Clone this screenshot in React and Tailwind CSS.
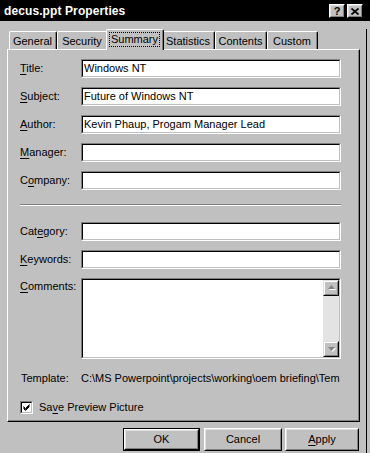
import React from "react";

function Raised({ className = "", innerClassName = "", children }) {
  return (
    <div className={`border border-t-white border-l-white border-r-black border-b-black bg-[#c0c0c0] ${className}`}>
      <div className={`w-full h-full border border-t-[#dfdfdf] border-l-[#dfdfdf] border-r-[#808080] border-b-[#808080] flex items-center justify-center ${innerClassName}`}>
        {children}
      </div>
    </div>
  );
}

function Field({ className = "", children, innerClassName = "" }) {
  return (
    <div className={`border border-t-[#808080] border-l-[#808080] border-r-white border-b-white ${className}`}>
      <div className={`w-full h-full border border-t-black border-l-black border-r-[#c0c0c0] border-b-[#c0c0c0] bg-white ${innerClassName}`}>
        {children}
      </div>
    </div>
  );
}

function U({ children }) {
  return <span className="underline underline-offset-[2px]">{children}</span>;
}

function Row({ label, value }) {
  return (
    <div className="flex items-center h-[19px]">
      <div className="w-[61px] leading-[13px] whitespace-nowrap">{label}</div>
      <Field className="w-[260px] h-[19px]" innerClassName="flex items-center pl-[1px] leading-[13px] whitespace-nowrap overflow-hidden">
        {value}
      </Field>
    </div>
  );
}

function Tab({ label, w, selected }) {
  if (selected) {
    return (
      <div className={`relative z-10 -mx-[2px] h-[21px] ${w} border-l border-t border-white border-r border-r-black rounded-t-[2px] bg-[#c0c0c0]`}>
        <div className="h-full border-r border-r-[#808080] pt-[2px] px-[2px]">
          <div className="h-[15px] border border-dotted border-black flex items-center justify-center leading-[13px]">
            {label}
          </div>
        </div>
      </div>
    );
  }
  return (
    <div className={`mt-[2px] h-[18px] ${w} border-l border-t border-white border-r border-r-black rounded-t-[2px]`}>
      <div className="h-full border-r border-r-[#808080] flex items-center justify-center leading-[13px] pt-[1px]">
        {label}
      </div>
    </div>
  );
}

function ScrollBtn({ down }) {
  return (
    <div className="h-[16px] w-full border border-t-[#dfdfdf] border-l-[#dfdfdf] border-r-black border-b-black bg-[#c0c0c0]">
      <div className="w-full h-full border border-t-white border-l-white border-r-[#808080] border-b-[#808080] flex items-center justify-center">
        <svg width="9" height="6" viewBox="0 0 9 6">
          {down ? (
            <>
              <polygon points="2,2 9,2 5.5,6" fill="#ffffff" />
              <polygon points="1,1 8,1 4.5,5" fill="#808080" />
            </>
          ) : (
            <>
              <polygon points="5.5,1 9,5 2,5" fill="#ffffff" />
              <polygon points="4.5,0 8,4 1,4" fill="#808080" />
            </>
          )}
        </svg>
      </div>
    </div>
  );
}

export default function App() {
  return (
    <div className="w-[370px] h-[453px] bg-[#c0c0c0] text-black text-[11px] font-[family-name:Liberation_Sans,Arial,sans-serif] overflow-hidden">
      {/* Title bar */}
      <div className="h-[21px] bg-black flex items-center justify-between pl-[4px] pr-[7px]">
        <span className="text-white font-bold text-[12px] leading-none tracking-[0.1px]">decus.ppt Properties</span>
        <div className="flex gap-[2px] pt-[1px]">
          <Raised className="w-[16px] h-[14px]">
            <span className="font-bold text-[11px] leading-none">?</span>
          </Raised>
          <Raised className="w-[16px] h-[14px]">
            <svg width="8" height="7" viewBox="0 0 8 7">
              <path d="M0.5 0.5 L7.5 6.5 M7.5 0.5 L0.5 6.5" stroke="#000" strokeWidth="1.7" />
            </svg>
          </Raised>
        </div>
      </div>

      {/* Body */}
      <div className="w-[367px] h-[432px] border-r border-black">
        {/* Tabs */}
        <div className="flex items-start h-[21px] mt-[8px] pl-[9px] -mb-px relative z-10">
          <Tab label="General" w="w-[48px]" />
          <Tab label="Security" w="w-[51px]" />
          <Tab label="Summary" w="w-[58px]" selected />
          <Tab label="Statistics" w="w-[53px]" />
          <Tab label="Contents" w="w-[52px]" />
          <Tab label="Custom" w="w-[51px]" />
        </div>

        {/* Panel */}
        <div className="ml-[7px] w-[353px] h-[373px] border border-t-white border-l-white border-r-black border-b-black">
          <div className="h-full border-r border-b border-r-[#808080] border-b-[#808080] pt-[9px] pl-[12px]">
            <div className="flex flex-col gap-[9px]">
              <Row label={<><U>T</U>itle:</>} value="Windows NT" />
              <Row label={<><U>S</U>ubject:</>} value="Future of Windows NT" />
              <Row label={<><U>A</U>uthor:</>} value="Kevin Phaup, Progam Manager Lead" />
              <Row label={<><U>M</U>anager:</>} value="" />
              <Row label={<>C<U>o</U>mpany:</>} value="" />
            </div>

            <div className="mt-[14px] w-[321px] h-[2px] border-t border-t-[#808080] border-b border-b-white" />

            <div className="mt-[16px] flex flex-col gap-[9px]">
              <Row label={<>Cat<U>e</U>gory:</>} value="" />
              <Row label={<><U>K</U>eywords:</>} value="" />
              <div className="flex items-start h-[81px]">
                <div className="w-[61px] leading-[13px] pt-[2px]"><U>C</U>omments:</div>
                <Field className="w-[260px] h-[81px]" innerClassName="flex">
                  <div className="flex-1" />
                  <div className="w-[16px] h-full flex flex-col">
                    <ScrollBtn />
                    <div className="flex-1 bg-[#e3e3e3]" />
                    <ScrollBtn down />
                  </div>
                </Field>
              </div>
            </div>

            <div className="mt-[13px] flex h-[13px] leading-[13px]">
              <div className="w-[61px] pl-[1px]">Template:</div>
              <div className="whitespace-nowrap">C:\MS Powerpoint\projects\working\oem briefing\Tem</div>
            </div>

            <div className="mt-[16px] flex items-center h-[13px]">
              <Field className="w-[13px] h-[13px]" innerClassName="flex items-center justify-center">
                <svg width="7" height="7" viewBox="0 0 7 7">
                  <path d="M0.5 2.5 L2.5 4.5 L6.5 0.5 M0.5 3.5 L2.5 5.5 L6.5 1.5 M0.5 4.5 L2.5 6.5 L6.5 2.5" stroke="#000" strokeWidth="1" fill="none" />
                </svg>
              </Field>
              <span className="ml-[6px] leading-[13px]">Sa<U>v</U>e Preview Picture</span>
            </div>
          </div>
        </div>

        {/* Buttons */}
        <div className="mt-[6px] flex h-[23px] pl-[123px]">
          <div className="w-[77px] h-[23px] border border-black">
            <Raised className="w-full h-full">OK</Raised>
          </div>
          <Raised className="ml-[4px] w-[78px] h-[23px]">Cancel</Raised>
          <Raised className="ml-[3px] w-[74px] h-[23px]"><span><U>A</U>pply</span></Raised>
        </div>
      </div>
    </div>
  );
}
